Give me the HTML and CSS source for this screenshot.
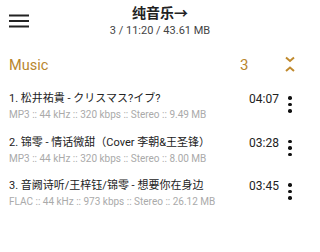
FILE: index.html
```html
<!DOCTYPE html>
<html>
<head>
<meta charset="utf-8">
<link rel="stylesheet" href="styles.css">
</head>
<body>
<div class="app">
  <header class="topbar">
    <div class="menu">
      <svg width="20" height="14" viewBox="0 0 20 14"><rect x="0" y="0.5" width="20" height="2" fill="#222"/><rect x="0" y="6" width="20" height="2" fill="#222"/><rect x="0" y="11.5" width="20" height="2" fill="#222"/></svg>
    </div>
    <div class="titles">
      <div class="title">纯音乐→</div>
      <div class="subtitle">3 / 11:20 / 43.61 MB</div>
    </div>
    <div class="spacer"></div>
  </header>
  <section class="group">
    <div class="group-name">Music</div>
    <div class="group-count">3</div>
    <div class="collapse">
      <svg width="12" height="18" viewBox="0 0 12 18"><path d="M2 1.5 L6 5 L10 1.5" fill="none" stroke="#c08a2e" stroke-width="2"/><path d="M2 15 L6 11.5 L10 15" fill="none" stroke="#c08a2e" stroke-width="2"/></svg>
    </div>
  </section>
  <ul class="tracks">
    <li class="track">
      <div class="info">
        <div class="name">1. 松井祐貴 - クリスマス?イブ?</div>
        <div class="meta">MP3 :: 44 kHz :: 320 kbps :: Stereo :: 9.49 MB</div>
      </div>
      <div class="dur">04:07</div>
      <div class="more"><span></span><span></span><span></span></div>
    </li>
    <li class="track">
      <div class="info">
        <div class="name">2. 锦零 - 情话微甜（Cover 李朝&amp;王圣锋）</div>
        <div class="meta">MP3 :: 44 kHz :: 320 kbps :: Stereo :: 8.00 MB</div>
      </div>
      <div class="dur">03:28</div>
      <div class="more"><span></span><span></span><span></span></div>
    </li>
    <li class="track">
      <div class="info">
        <div class="name">3. 音阙诗听/王梓钰/锦零 - 想要你在身边</div>
        <div class="meta">FLAC :: 44 kHz :: 973 kbps :: Stereo :: 26.12 MB</div>
      </div>
      <div class="dur">03:45</div>
      <div class="more"><span></span><span></span><span></span></div>
    </li>
  </ul>
</div>
</body>
</html>
```
FILE: styles.css
```css
* { box-sizing: border-box; margin: 0; padding: 0; }
html, body { background: #fff; }
body {
  font-family: Roboto, "Noto Sans CJK SC", sans-serif;
  width: 320px;
  height: 252px;
  overflow: hidden;
}
.app { display: flex; flex-direction: column; }
.topbar {
  display: flex;
  align-items: flex-start;
  height: 40px;
  padding: 0 9px;
}
.menu { width: 40px; padding-top: 14px; }
.menu svg { display: block; }
.spacer { width: 40px; }
.titles { flex: 1; display: flex; flex-direction: column; align-items: center; padding-top: 5px; }
.title { font-size: 14px; font-weight: bold; color: #222; line-height: 17px; }
.subtitle { font-size: 11px; color: #444; line-height: 14px; margin-top: 2px; }
.group {
  display: flex;
  align-items: center;
  height: 42px;
  margin-top: 4px;
  padding: 0 20px 0 9px;
}
.group-name { flex: 1; font-size: 14.5px; color: #b8862e; }
.group-count { font-size: 15px; color: #b8862e; width: 40px; }
.collapse { width: 20px; display: flex; justify-content: center; align-items: center; }
.collapse svg { display: block; }
.tracks { list-style: none; }
.track {
  display: flex;
  align-items: flex-start;
  height: 43.5px;
  padding: 5px 20px 0 9px;
}
.info { flex: 1; min-width: 0; }
.name { font-size: 11px; color: #222; line-height: 16px; white-space: nowrap; }
.meta { font-size: 10px; color: #aaa; line-height: 14px; margin-top: 1px; white-space: nowrap; }
.dur { font-size: 12px; color: #222; line-height: 16px; width: 31px; }
.more {
  width: 20px;
  display: flex;
  flex-direction: column;
  align-items: center;
  gap: 3px;
  padding-top: 5px;
}
.more span { width: 3.5px; height: 3.5px; border-radius: 50%; background: #111; }
```
